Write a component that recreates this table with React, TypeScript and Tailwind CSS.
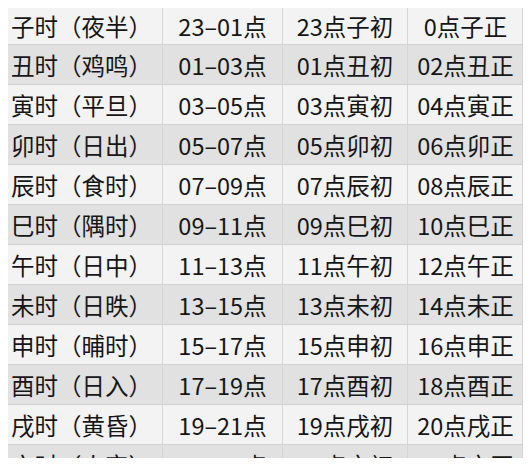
import React from "react";

const rows: [string, string, string, string][] = [
  ["子时（夜半）", "23–01点", "23点子初", "0点子正"],
  ["丑时（鸡鸣）", "01–03点", "01点丑初", "02点丑正"],
  ["寅时（平旦）", "03–05点", "03点寅初", "04点寅正"],
  ["卯时（日出）", "05–07点", "05点卯初", "06点卯正"],
  ["辰时（食时）", "07–09点", "07点辰初", "08点辰正"],
  ["巳时（隅时）", "09–11点", "09点巳初", "10点巳正"],
  ["午时（日中）", "11–13点", "11点午初", "12点午正"],
  ["未时（日昳）", "13–15点", "13点未初", "14点未正"],
  ["申时（晡时）", "15–17点", "15点申初", "16点申正"],
  ["酉时（日入）", "17–19点", "17点酉初", "18点酉正"],
  ["戌时（黄昏）", "19–21点", "19点戌初", "20点戌正"],
  ["亥时（人定）", "21–23点", "21点亥初", "22点亥正"],
];

export default function App() {
  return (
    <div
      className="w-[532px] h-[468px] bg-white pt-[8px] pl-[8px]"
      style={{ fontFamily: '"Noto Sans CJK SC", "Noto Sans", sans-serif' }}
    >
      <div className="w-[515px] h-[450px] overflow-hidden border-r border-[#d6d6d6]">
        {rows.map((r, i) => (
          <div
            key={i}
            className={`grid grid-cols-[155px_120px_125px_115px] border-b border-[#d2d2d2] text-[23.5px] text-[#161616] ${
              i % 2 === 0 ? "bg-[#f3f3f3]" : "bg-[#e1e1e1]"
            } ${i === 0 ? "h-[37px]" : "h-[40px]"}`}
          >
            {r.map((c, j) => (
              <div
                key={j}
                className={`flex items-center leading-none pt-[2px] ${
                  j === 0 ? "justify-start pl-[3px]" : "justify-center"
                } ${j < 3 ? "border-r border-[#d6d6d6]" : ""}`}
              >
                {c}
              </div>
            ))}
          </div>
        ))}
      </div>
    </div>
  );
}
